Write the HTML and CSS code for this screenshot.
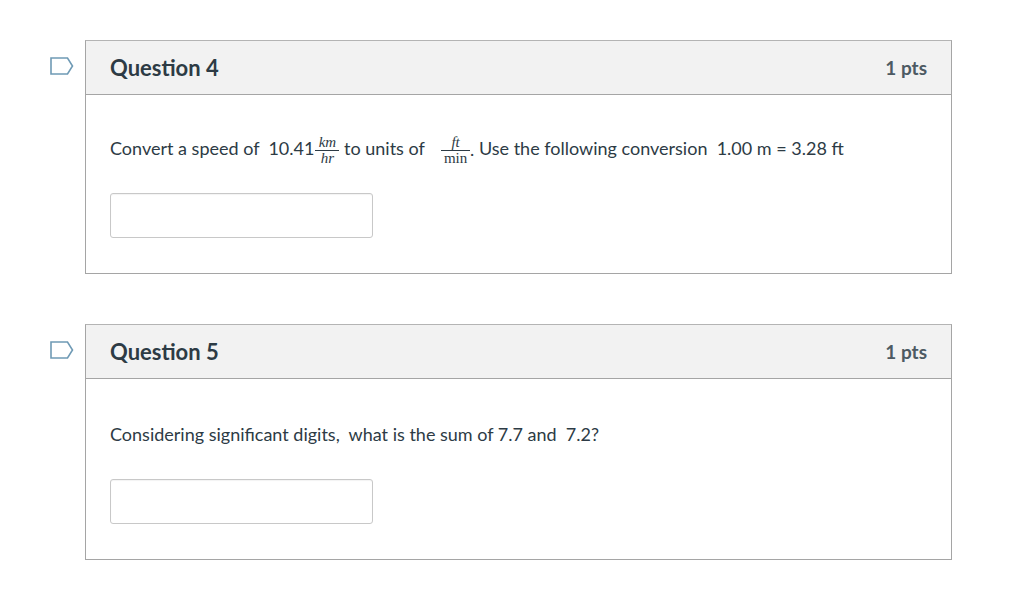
FILE: index.html
```html
<!DOCTYPE html>
<html lang="en">
<head>
  <meta charset="UTF-8">
  <meta name="viewport" content="width=device-width, initial-scale=1.0">
  <title>Quiz</title>
  <link rel="stylesheet" href="styles.css">
</head>
<body>

<div class="quiz">
  <div class="question-row">
    <svg class="flag" width="24" height="18" viewBox="0 0 24 18"><path d="M1 1H17.500L22.500 9L17.500 17H1Z" fill="#fff" stroke="#6f9ab5" stroke-width="1.600"/></svg>
    <div class="question question-first">
      <div class="question-header">
        <span class="question-title">Question 4</span>
        <span class="question-pts">1 pts</span>
      </div>
      <div class="question-body">
        <p class="question-text">
          <span>Convert a speed of&nbsp; 10.41</span>
          <span class="frac frac-km"><span class="frac-top math-i">km</span><span class="frac-bottom math-i">hr</span></span>
          <span>&nbsp;to units of&nbsp;</span>
          <span class="frac frac-ft"><span class="frac-top math-i">ft</span><span class="frac-bottom">min</span></span>
          <span class="math-dot">.</span>
          <span>&nbsp;Use the following conversion&nbsp; 1.00 m = 3.28 ft</span>
        </p>
        <input class="answer" type="text">
      </div>
    </div>
  </div>

  <div class="question-row">
    <svg class="flag" width="24" height="18" viewBox="0 0 24 18"><path d="M1 1H17.500L22.500 9L17.500 17H1Z" fill="#fff" stroke="#6f9ab5" stroke-width="1.600"/></svg>
    <div class="question">
      <div class="question-header">
        <span class="question-title">Question 5</span>
        <span class="question-pts">1 pts</span>
      </div>
      <div class="question-body">
        <p class="question-text">Considering significant digits,&nbsp; what is the sum of 7.7 and&nbsp; 7.2?</p>
        <input class="answer" type="text">
      </div>
    </div>
  </div>
</div>

</body>
</html>
```

FILE: styles.css
```css
body {
  margin: 0;
  background: #fff;
  font-family: Lato, "Open Sans", sans-serif;
  color: #2d3b45;
}

.quiz {
  display: flex;
  flex-direction: column;
  gap: 50px;
  padding: 40px 72px 0 50px;
}

.question-row {
  display: flex;
  align-items: flex-start;
}

.flag {
  flex: none;
  margin: 17px 11px 0 0;
}

.question {
  flex: 1;
  border: 1px solid #a5a5a5;
  border-top-color: #b4b4b4;
}

.question-header {
  display: flex;
  justify-content: space-between;
  align-items: center;
  height: 53px;
  padding: 0 24px;
  background: #f2f2f2;
  border-bottom: 1px solid #a5a5a5;
}

.question-title {
  font-size: 22px;
  font-weight: 700;
}

.question-pts {
  font-size: 19px;
  font-weight: 700;
  color: #4d5a63;
}

.question-body {
  padding: 36px 24px 35px;
}

.question-first .question-body {
  padding-top: 34px;
}

.question-text {
  display: flex;
  align-items: center;
  height: 38px;
  margin: 0 0 26px;
  font-size: 18px;
  white-space: pre;
}

.frac {
  display: inline-flex;
  flex-direction: column;
  align-items: center;
  margin-top: 4px;
  font-family: "Liberation Serif", serif;
  font-size: 15px;
  line-height: 15px;
}

.frac-top {
  width: 100%;
  text-align: center;
  border-bottom: 1px solid #2d3b45;
}

.frac-km {
  width: 24px;
  margin-left: 1px;
}

.frac-ft {
  width: 29px;
  margin-left: 12px;
}

.math-i {
  font-style: italic;
}

.math-dot {
  margin-top: 2px;
}

.answer {
  display: block;
  box-sizing: border-box;
  width: 263px;
  height: 45px;
  margin: 0;
  border: 1px solid #c8c8c8;
  border-radius: 3px;
  background: #fff;
  box-shadow: inset 0 1px 1px rgba(0, 0, 0, 0.05);
}
```
